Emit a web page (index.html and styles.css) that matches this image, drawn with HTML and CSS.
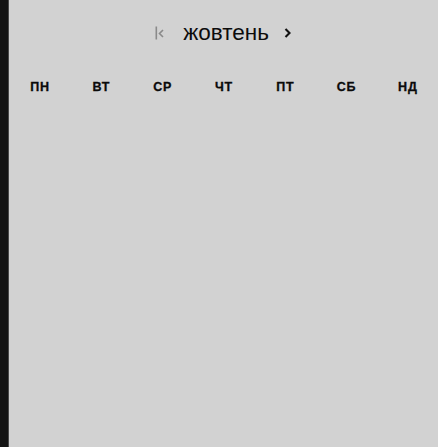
FILE: index.html
```html
<!DOCTYPE html>
<html lang="uk">
<head>
<meta charset="utf-8">
<link rel="stylesheet" href="styles.css">
</head>
<body>
<div class="app">
  <div class="edge"></div>
  <div class="calendar">
    <div class="header">
      <span class="nav first">
        <svg width="10" height="16" viewBox="0 0 10 16"><rect x="0.5" y="1.5" width="1.6" height="13" fill="#8a8a8a"/><path d="M8 5 L4.5 8.5 L8 12" fill="none" stroke="#8a8a8a" stroke-width="1.6"/></svg>
      </span>
      <span class="title">жовтень</span>
      <span class="nav next">
        <svg width="8" height="16" viewBox="0 0 8 16"><path d="M1.5 4 L5.5 8 L1.5 12" fill="none" stroke="#111" stroke-width="2.1"/></svg>
      </span>
    </div>
    <div class="weekdays">
      <div>ПН</div><div>ВТ</div><div>СР</div><div>ЧТ</div><div>ПТ</div><div>СБ</div><div>НД</div>
    </div>
  </div>
</div>
</body>
</html>
```
FILE: styles.css
```css
html, body { margin: 0; padding: 0; }
body {
  background: #d2d2d2;
  font-family: "Liberation Sans", Arial, sans-serif;
  color: #111;
}
.app {
  display: flex;
  height: 447px;
}
.edge {
  width: 8px;
  flex: none;
  background: #141414;
  border-right: 1px solid #4a4a4a;
}
.calendar {
  flex: 1;
  display: flex;
  flex-direction: column;
}
.header {
  display: flex;
  align-items: center;
  justify-content: center;
  height: 34px;
  margin-top: 16px;
}
.nav { display: flex; align-items: center; }
.first { margin-right: 18px; }
.next { margin-left: 15px; }
.title {
  font-size: 22.5px;
  line-height: 34px;
  color: #0c0c0c;
}
.weekdays {
  display: grid;
  grid-template-columns: repeat(7, 1fr);
  margin-top: 29px;
  font-size: 12.5px;
  font-weight: bold;
  letter-spacing: 0.8px;
  text-align: center;
  line-height: 16px;
  color: #0a0a0a;
  -webkit-text-stroke: 0.3px #0a0a0a;
}
.weekdays div { padding-left: 1px; }
```
